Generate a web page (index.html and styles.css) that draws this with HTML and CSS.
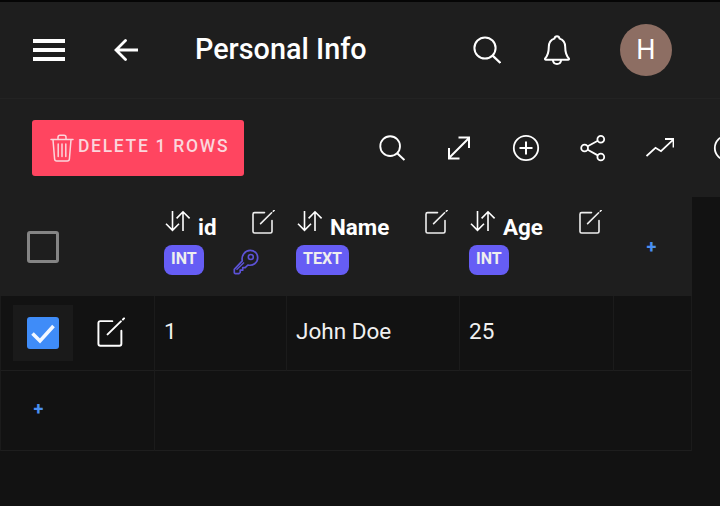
FILE: index.html
```html
<!DOCTYPE html>
<html lang="en">
<head>
<meta charset="utf-8">
<title>Personal Info</title>
<link rel="stylesheet" href="styles.css">
</head>
<body>
<div class="app">
  <svg width="0" height="0" class="defs">
    <symbol id="edit" viewBox="0 0 24 24"><path d="M13.500 2.600H3.600A1.600 1.600 0 0 0 2 4.200v17.200A1.600 1.600 0 0 0 3.600 23h15.800a1.600 1.600 0 0 0 1.600-1.600V10.500M9.600 13.600 20.600 2.800M22.300 1.200l.9-.9" fill="none" stroke="currentColor" stroke-width="1.600" stroke-linecap="round"/></symbol>
    <symbol id="sort" viewBox="0 0 26 22"><path d="M7.500 1v19M1 13.800 7.500 20.400 14 13.800M18 21V2M11.600 8.400 18 1.800 24.600 8.400" fill="none" stroke="currentColor" stroke-width="1.600"/></symbol>
    <symbol id="search" viewBox="0 0 28 28"><circle cx="12" cy="12" r="10.600" fill="none" stroke="currentColor" stroke-width="2"/><path d="M19.600 19.600 27.400 27" fill="none" stroke="currentColor" stroke-width="2.200"/></symbol>
  </svg>

  <header class="topbar">
    <button class="menu" aria-label="Menu"><span></span><span></span><span></span></button>
    <svg class="back" viewBox="0 0 24 22" aria-hidden="true"><path d="M11.500 1.500 2 11l9.500 9.500M2.500 11H24" fill="none" stroke="currentColor" stroke-width="2.800" stroke-linecap="round"/></svg>
    <h1 class="title">Personal Info</h1>
    <svg class="top-search"><use href="#search"/></svg>
    <svg class="bell" viewBox="0 0 26 30" aria-hidden="true"><path d="M13 1.200c-1.500 0-2.300 1-2.600 2.400C6.800 4.800 4.800 8 4.800 11.800c0 5-.7 8.400-3.600 11.600-.5.600-.1 1.400.7 1.400h22.200c.8 0 1.200-.8.7-1.400-2.900-3.200-3.600-6.600-3.600-11.600 0-3.800-2-7-5.600-8.200C15.300 2.200 14.500 1.200 13 1.200ZM8.800 25c.3 2.400 2 4 4.200 4s3.900-1.600 4.200-4" fill="none" stroke="currentColor" stroke-width="2"/></svg>
    <div class="avatar">H</div>
  </header>

  <section class="toolbar">
    <button class="delete">
      <svg class="trash" viewBox="0 0 24 28" aria-hidden="true"><path d="M1 5.500h22M8 5.300V3.200C8 2 8.900 1.200 10 1.200h4c1.100 0 2 .8 2 2v2.100M3 5.800 4.600 25c.1 1.200 1 2 2.100 2h10.600c1.100 0 2-.8 2.100-2L21 5.800M8.200 10v12.500M12 10v12.500M15.800 10v12.500" fill="none" stroke="currentColor" stroke-width="1.500" stroke-linecap="round"/></svg>
      <span class="delete-label">DELETE 1 ROWS</span>
    </button>
    <div class="tools">
      <span class="tool-slot"><svg class="tool-search"><use href="#search"/></svg></span>
      <svg class="tool" viewBox="0 0 28 28" aria-hidden="true"><path d="M4.500 23.500 23.500 4.500M13.500 3.500h10.500v10.500M4 14v10.500h10.500" fill="none" stroke="currentColor" stroke-width="2"/></svg>
      <svg class="tool" viewBox="0 0 28 28" aria-hidden="true"><circle cx="14" cy="14" r="12.200" fill="none" stroke="currentColor" stroke-width="1.800"/><path d="M14 7.500v13M7.500 14h13" fill="none" stroke="currentColor" stroke-width="2"/></svg>
      <svg class="tool" viewBox="0 0 28 28" aria-hidden="true"><g fill="none" stroke="currentColor" stroke-width="1.800"><circle cx="21.800" cy="5.200" r="3.400"/><circle cx="5.600" cy="14" r="3.400"/><circle cx="21.800" cy="23" r="3.400"/><path d="M8.700 12.300 18.800 6.800M8.700 15.700 18.800 21.400"/></g></svg>
      <svg class="tool" viewBox="0 0 28 28" aria-hidden="true"><path d="M.5 22 9.500 13.800 15 17.200 27 5.800M19 5h8.500v8.500" fill="none" stroke="currentColor" stroke-width="1.800"/></svg>
      <svg class="tool" viewBox="0 0 28 28" aria-hidden="true"><circle cx="14" cy="14" r="12.200" fill="none" stroke="currentColor" stroke-width="1.800"/></svg>
    </div>
  </section>

  <main class="grid">
    <div class="head first"><span class="check"></span></div>
    <div class="head col">
      <div class="line">
        <span class="label"><svg class="sort"><use href="#sort"/></svg><strong class="name">id</strong></span>
        <svg class="edit"><use href="#edit"/></svg>
      </div>
      <div class="line">
        <span class="badge">INT</span>
        <svg class="key" viewBox="0 0 26 26" aria-hidden="true"><path d="M9.300 11.800C8.200 6.700 11.800 1.300 17.200 1.300c4.300 0 7.500 3.300 7.500 7.400 0 5.100-4.900 8.500-9.800 7.300l-2.700 2.700H9.700v2.500H7.200v2.200l-1.300 1.200H2.400c-.7 0-1.100-.5-1.100-1.100v-3.200Z" fill="none" stroke="currentColor" stroke-width="1.700" stroke-linejoin="round"/><circle cx="17.800" cy="8" r="2.500" fill="none" stroke="currentColor" stroke-width="1.600"/><path d="M3.500 20.800 11 13.500" fill="none" stroke="currentColor" stroke-width="1.400"/></svg>
      </div>
    </div>
    <div class="head col">
      <div class="line">
        <span class="label"><svg class="sort"><use href="#sort"/></svg><strong class="name">Name</strong></span>
        <svg class="edit"><use href="#edit"/></svg>
      </div>
      <div class="line"><span class="badge">TEXT</span></div>
    </div>
    <div class="head col">
      <div class="line">
        <span class="label"><svg class="sort"><use href="#sort"/></svg><strong class="name">Age</strong></span>
        <svg class="edit"><use href="#edit"/></svg>
      </div>
      <div class="line"><span class="badge">INT</span></div>
    </div>
    <div class="head add"><span class="plus">+</span></div>

    <div class="cell select">
      <span class="check-wrap">
        <span class="check on"><svg viewBox="0 0 32 32" aria-hidden="true"><path d="M5.500 16.500 13 24 26.500 9" fill="none" stroke="currentColor" stroke-width="3.600"/></svg></span>
      </span>
      <svg class="row-edit"><use href="#edit"/></svg>
    </div>
    <div class="cell">1</div>
    <div class="cell">John Doe</div>
    <div class="cell">25</div>
    <div class="cell end"></div>

    <div class="cell foot"><span class="plus">+</span></div>
    <div class="cell foot wide end"></div>
  </main>
</div>
</body>
</html>
```

FILE: styles.css
```css
* {
  box-sizing: border-box;
}

html,
body {
  margin: 0;
  padding: 0;
  background: #121212;
}

.defs {
  position: absolute;
}

.app {
  display: flex;
  flex-direction: column;
  width: 720px;
  height: 506px;
  overflow: hidden;
  font-family: Roboto, "Liberation Sans", sans-serif;
  color: #fff;
}

.topbar {
  display: flex;
  align-items: center;
  flex: none;
  height: 99px;
  padding-left: 33px;
  border-top: 2px solid #050505;
  border-bottom: 1px solid #232323;
  background: #1e1e1e;
}

.menu {
  display: flex;
  flex-direction: column;
  gap: 5px;
  width: 32px;
  padding: 0;
  border: 0;
  background: none;
}

.menu span {
  display: block;
  height: 4px;
  background: #fff;
}

.back {
  width: 24px;
  height: 22px;
  margin-left: 49px;
  color: #fff;
}

.title {
  width: 278px;
  margin: 0 0 2px 57px;
  font-size: 28.800px;
  font-weight: 500;
  white-space: nowrap;
}

.top-search {
  width: 28px;
  height: 28px;
  color: #fff;
}

.bell {
  width: 26px;
  height: 30px;
  margin-left: 43px;
  color: #fff;
}

.avatar {
  display: flex;
  align-items: center;
  justify-content: center;
  width: 52px;
  height: 52px;
  margin-left: 50px;
  border-radius: 50%;
  background: #8d6e63;
  font-size: 27px;
}

.toolbar {
  display: flex;
  align-items: center;
  flex: none;
  height: 98px;
  padding: 0 0 0 32px;
  background: #1e1e1e;
}

.delete {
  display: flex;
  align-items: center;
  flex: none;
  gap: 4px;
  width: 212px;
  height: 56px;
  padding: 0 0 0 18px;
  border: 0;
  border-radius: 3px;
  background: #ff4560;
  color: #fbd6dc;
  font-family: inherit;
  font-size: 17.500px;
  font-weight: 500;
  letter-spacing: 1.700px;
  white-space: nowrap;
}

.delete-label {
  margin-bottom: 4px;
}

.trash {
  flex: none;
  width: 24px;
  height: 28px;
}

.tools {
  display: flex;
  flex: none;
  gap: 39px;
  margin-left: 134px;
}

.tool {
  flex: none;
  width: 28px;
  height: 28px;
  color: #fff;
}

.tool-slot {
  display: flex;
  align-items: center;
  justify-content: center;
  flex: none;
  width: 28px;
  height: 28px;
}

.tool-search {
  width: 26px;
  height: 26px;
  color: #fff;
}

.grid {
  display: grid;
  grid-template-columns: 154px 132px 173px 154px 79px;
  grid-template-rows: 99px 75px 80px;
  width: 692px;
}

.head {
  background: #1e1e1e;
}

.first,
.add {
  display: flex;
  align-items: center;
}

.first {
  padding-left: 27px;
}

.add {
  justify-content: center;
  padding-right: 2px;
}

.col {
  display: flex;
  flex-direction: column;
  padding: 13px 11px 0 10px;
}

.line {
  display: flex;
  align-items: flex-start;
  justify-content: space-between;
}

.line + .line {
  margin-top: 5px;
  align-items: center;
}

.label {
  display: flex;
  align-items: flex-start;
  margin-left: 1px;
}

.sort {
  flex: none;
  width: 26px;
  height: 22px;
  color: #fff;
}

.name {
  margin: 4px 0 0 7px;
  font-size: 22.400px;
  font-weight: 700;
  line-height: 26px;
}

.edit {
  flex: none;
  width: 24px;
  height: 24px;
  color: #eee;
}

.badge {
  height: 30px;
  padding: 0 7px;
  border-radius: 8px;
  background: #665df5;
  color: #eee;
  font-size: 16px;
  font-weight: 700;
  line-height: 27px;
}

.key {
  width: 26px;
  height: 26px;
  margin: 3px 16px 0 0;
  color: #5c52d6;
}

.check {
  display: block;
  flex: none;
  width: 32px;
  height: 32px;
  border: 3px solid #858585;
  border-radius: 3px;
}

.check.on {
  border: 0;
  background: #3f8cf8;
  color: #f2f7ff;
}

.check.on svg {
  display: block;
  width: 32px;
  height: 32px;
}

.cell {
  display: flex;
  align-items: center;
  padding: 0 0 4px 9px;
  border-left: 1px solid #1b1b1b;
  border-bottom: 1px solid #1e1e1e;
  background: #121212;
  font-size: 22.500px;
  color: #f0f0f0;
}

.end {
  border-right: 1px solid #1b1b1b;
}

.select {
  padding: 0 0 6px 12px;
}

.check-wrap {
  display: flex;
  align-items: center;
  justify-content: center;
  width: 60px;
  height: 56px;
  margin-top: 6px;
  background: #1a1a1a;
}

.row-edit {
  width: 29px;
  height: 31px;
  margin: 5px 0 0 23px;
  color: #fff;
}

.plus {
  color: #4a8ff0;
  font-size: 18px;
  font-weight: 700;
  line-height: 1;
}

.foot {
  justify-content: center;
  padding: 0 78px 3px 0;
}

.wide {
  grid-column: 2 / -1;
}
```
